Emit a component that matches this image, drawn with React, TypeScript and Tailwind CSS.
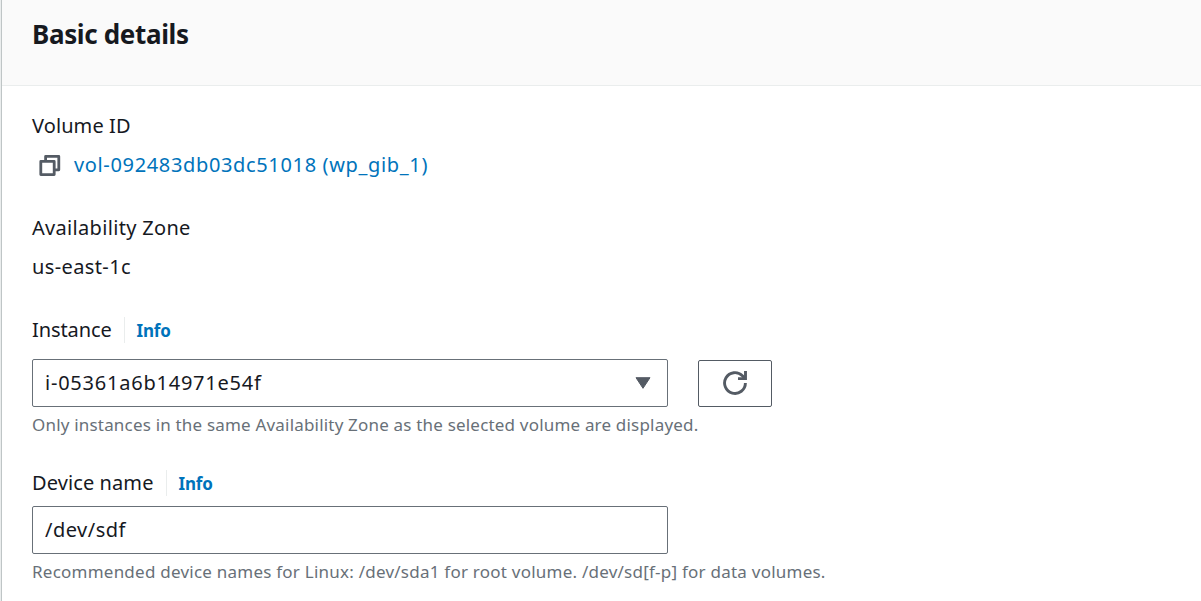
import type { ReactNode } from "react";

function Label({ children, spacing }: { children: ReactNode; spacing: string }) {
  return <span className={`whitespace-nowrap text-[20px] leading-[30px] ${spacing}`}>{children}</span>;
}

function InfoLink() {
  return (
    <a href="#" className="ml-3 flex h-[26px] items-center border-l border-[#eaeded] pl-3 text-[17px] font-bold tracking-[-0.2px] text-[#0073bb]">
      <span className="pt-[2px]">Info</span>
    </a>
  );
}

function CopyIcon() {
  return (
    <svg className="ml-[7px] mt-[2px] h-[22px] w-[22px]" viewBox="0 0 22 22" fill="none" stroke="#545b64" strokeWidth="2.8" strokeLinejoin="round">
      <path d="M1.8 6.4h13.4v13.2H1.8z" />
      <path d="M6.6 6.4v-5h13.2v13.4h-4.6" />
    </svg>
  );
}

function RefreshIcon() {
  return (
    <svg className="-mt-px h-6 w-6" viewBox="0 0 24 24" fill="none" stroke="#545b64" strokeWidth="2.9">
      <path d="M22.4 12A10.4 10.4 0 1 1 19.4 4.7L22 7.4" />
      <path d="M22.5 0v7.6H15" />
    </svg>
  );
}

export default function App() {
  return (
    <main className="h-[601px] w-[1201px] overflow-hidden border-l border-[#eaeded] bg-white font-['Noto_Sans',sans-serif] text-[#16191f]">
      <section className="h-full border-l border-[#bfc5c6]">
        <header className="h-[86px] border-b border-[#eaeded] bg-[#fafafa] pl-[30px] pt-4">
          <h2 className="text-[26px] font-bold leading-9 tracking-[-0.35px]">Basic details</h2>
        </header>
        <div className="flex flex-col items-start pl-[30px] pt-[25px]">
          <Label spacing="tracking-[0.1px]">Volume ID</Label>
          <div className="mt-[9px] flex h-[30px] items-center">
            <CopyIcon />
            <a href="#" className="ml-[13px] whitespace-nowrap text-[20px] leading-[30px] tracking-[0.65px] text-[#0073bb]">
              vol-092483db03dc51018 (wp_gib_1)
            </a>
          </div>
          <div className="mt-[33px] flex flex-col gap-[9px]">
            <Label spacing="tracking-[0.32px]">Availability Zone</Label>
            <Label spacing="tracking-[0.38px]">us-east-1c</Label>
          </div>
          <div className="mt-[33px] flex h-[30px] items-center">
            <Label spacing="tracking-[-0.1px]">Instance</Label>
            <InfoLink />
          </div>
          <div className="mt-[14px] flex items-end gap-[30px]">
            <button className="flex h-12 w-[636px] items-center justify-between rounded-[2px] border border-[#687078] pl-3 pr-4">
              <Label spacing="tracking-[0.77px]">i-05361a6b14971e54f</Label>
              <svg className="h-3 w-4" viewBox="0 0 16 12" fill="#545b64" stroke="#545b64" strokeLinejoin="round">
                <path d="M1 .7h14L8 11.3z" />
              </svg>
            </button>
            <button aria-label="Refresh" className="flex h-[47px] w-[74px] items-center justify-center rounded-[2px] border border-[#545b64]">
              <RefreshIcon />
            </button>
          </div>
          <p className="mt-[3px] whitespace-nowrap text-[17px] leading-[30px] tracking-[0.19px] text-[#687078]">
            Only instances in the same Availability Zone as the selected volume are displayed.
          </p>
          <div className="mt-[28px] flex h-[30px] items-center">
            <Label spacing="tracking-[0.1px]">Device name</Label>
            <InfoLink />
          </div>
          <input
            aria-label="Device name"
            defaultValue="/dev/sdf"
            className="mt-[8px] h-12 w-[636px] rounded-[2px] border border-[#687078] px-3 pb-[2px] text-[20px] tracking-[0.5px]"
          />
          <p className="mt-[3px] whitespace-nowrap text-[17px] leading-[30px] tracking-[0.235px] text-[#687078]">
            Recommended device names for Linux: /dev/sda1 for root volume. /dev/sd[f-p] for data volumes.
          </p>
        </div>
      </section>
    </main>
  );
}
